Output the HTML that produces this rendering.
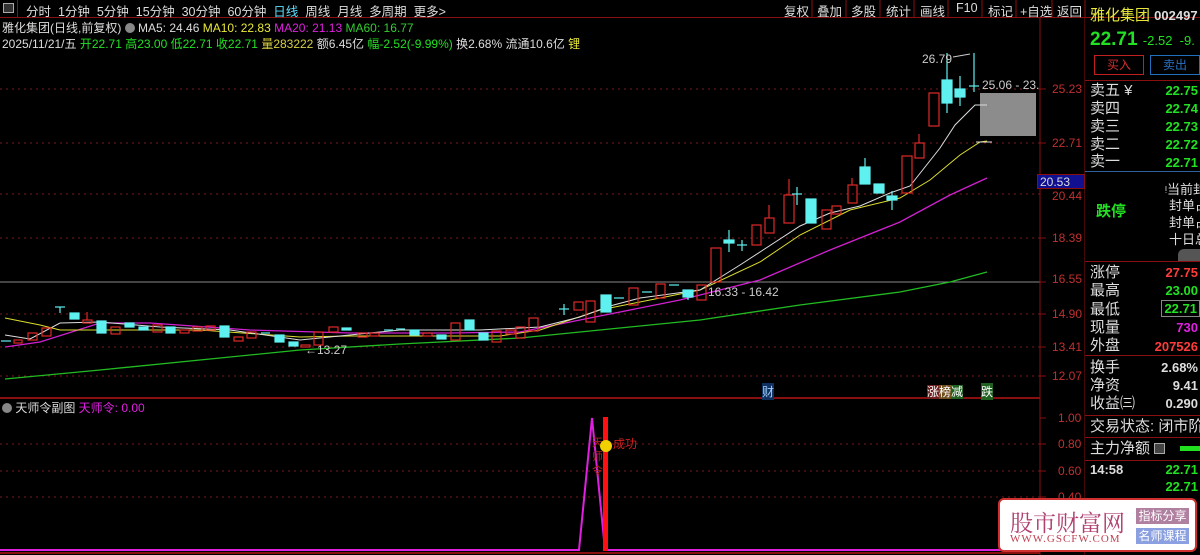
<!DOCTYPE html>
<html><head><meta charset="utf-8"><style>
*{margin:0;padding:0;box-sizing:border-box}
body{width:1200px;height:555px;background:#000;overflow:hidden;position:relative;font-family:"Liberation Sans","Noto Sans CJK SC",sans-serif;font-size:12px;color:#ccc}
.a{position:absolute;white-space:nowrap}
.r{color:#ff3b3b}.g{color:#22e022}.y{color:#e8e83a}.m{color:#e020e0}.w{color:#ddd}
.ax{position:absolute;left:1050px;color:#c03030;font-size:12px}
.lbl{position:absolute;left:1090px;font-size:15px;color:#ddd;line-height:17px;white-space:nowrap}
.val{position:absolute;right:2px;font-size:13px;font-weight:bold}
</style></head><body>
<div class="a" style="left:0;top:0;width:1200px;height:18px;border-bottom:1px solid #8a1010"></div>
<div class="a" style="left:3px;top:3px;width:11px;height:10px;border:1px solid #aaa;background:#333"></div>
<div class="a" style="left:17px;top:0;width:1px;height:18px;background:#8a1010"></div>
<div class="a w" style="left:26px;top:1px;font-size:12.5px">分时&nbsp;&nbsp;1分钟&nbsp;&nbsp;5分钟&nbsp;&nbsp;15分钟&nbsp;&nbsp;30分钟&nbsp;&nbsp;60分钟&nbsp;&nbsp;<span style="color:#5fe0ff">日线</span>&nbsp;&nbsp;周线&nbsp;&nbsp;月线&nbsp;&nbsp;多周期&nbsp;&nbsp;更多&gt;</div>
<div class="a w" style="left:780px;top:1px;font-size:12.5px">
<span style="position:absolute;left:4px">复权</span><span style="position:absolute;left:37px">叠加</span><span style="position:absolute;left:71px">多股</span><span style="position:absolute;left:106px">统计</span><span style="position:absolute;left:140px">画线</span><span style="position:absolute;left:176px">F10</span><span style="position:absolute;left:208px">标记</span><span style="position:absolute;left:240px">+自选</span><span style="position:absolute;left:277px">返回</span></div>
<svg class="a" style="left:0;top:0" width="1200" height="18"><g stroke="#8a1010"><line x1="812" y1="0" x2="812" y2="18"/><line x1="846" y1="0" x2="846" y2="18"/><line x1="880" y1="0" x2="880" y2="18"/><line x1="914" y1="0" x2="914" y2="18"/><line x1="948" y1="0" x2="948" y2="18"/><line x1="982" y1="0" x2="982" y2="18"/><line x1="1016" y1="0" x2="1016" y2="18"/><line x1="1052" y1="0" x2="1052" y2="18"/><line x1="1085" y1="0" x2="1085" y2="18"/></g></svg>
<div class="a w" style="left:2px;top:19px;font-size:12px">雅化集团(日线,前复权) <span style="display:inline-block;width:10px;height:10px;border-radius:5px;background:#888;vertical-align:-1px"></span> MA5: 24.46 <span class="y">MA10: 22.83</span> <span class="m">MA20: 21.13</span> <span class="g" style="color:#33cc33">MA60: 16.77</span></div>
<div class="a w" style="left:2px;top:35px;font-size:12px">2025/11/21/五 <span class="g">开22.71 高23.00 低22.71 收22.71</span> <span class="y" style="color:#d8d040">量283222</span> 额6.45亿 <span class="g">幅-2.52(-9.99%)</span> 换2.68% 流通10.6亿 <span class="y">锂</span></div>
<svg class="a" style="left:0;top:0" width="1085" height="555">
<g stroke="#7a1a1a" stroke-dasharray="2,4" stroke-width="1">
<line x1="0" y1="89" x2="1040" y2="89"/><line x1="0" y1="143" x2="1040" y2="143"/><line x1="0" y1="194" x2="1040" y2="194"/><line x1="0" y1="238" x2="1040" y2="238"/><line x1="0" y1="314" x2="1040" y2="314"/><line x1="0" y1="347" x2="1040" y2="347"/><line x1="0" y1="376" x2="1040" y2="376"/>
<line x1="0" y1="444" x2="1040" y2="444"/><line x1="0" y1="471" x2="1040" y2="471"/><line x1="0" y1="497" x2="1040" y2="497"/>
</g>
<line x1="0" y1="282" x2="1040" y2="282" stroke="#888"/>
<line x1="1040" y1="18" x2="1040" y2="555" stroke="#8a1010"/>
<line x1="1085" y1="18" x2="1085" y2="555" stroke="#8a1010"/>
<line x1="0" y1="398" x2="1040" y2="398" stroke="#8a1010" stroke-width="2"/>
<g stroke="#8a1010"><line x1="1040" y1="89" x2="1046" y2="89"/><line x1="1040" y1="143" x2="1046" y2="143"/><line x1="1040" y1="238" x2="1046" y2="238"/><line x1="1040" y1="282" x2="1046" y2="282"/><line x1="1040" y1="314" x2="1046" y2="314"/><line x1="1040" y1="347" x2="1046" y2="347"/><line x1="1040" y1="376" x2="1046" y2="376"/><line x1="1040" y1="418" x2="1046" y2="418"/><line x1="1040" y1="444" x2="1046" y2="444"/><line x1="1040" y1="471" x2="1046" y2="471"/><line x1="1040" y1="497" x2="1046" y2="497"/></g>
<polyline fill="none" stroke="#22bb22" stroke-width="1.3" points="5,379 100,370 200,360 300,350 400,344 520,338 600,330 700,320 800,305 900,292 950,282 987,272"/>
<polyline fill="none" stroke="#d020d0" stroke-width="1.3" points="5,347 40,342 100,323 150,323 250,330 350,333 450,333 520,332 600,316 680,300 760,280 830,250 900,222 950,195 987,178"/>
<polyline fill="none" stroke="#dddd30" stroke-width="1" points="5,318 40,325 60,330 100,330 200,330 300,337 350,336 430,336 500,336 540,330 600,310 650,300 700,290 760,262 800,235 850,210 900,198 930,180 960,155 980,142 987,141"/>
<polyline fill="none" stroke="#dddddd" stroke-width="1" points="5,335 30,339 60,323 100,322 160,327 230,330 300,340 400,330 480,330 540,327 580,317 610,306 640,298 700,290 740,265 800,226 830,213 860,206 890,193 910,186 940,148 955,125 975,105 987,105"/>
<g fill="none" stroke="#e02828" stroke-width="1.2">
<rect x="14" y="340" width="8" height="3"/><rect x="28" y="333" width="9" height="7"/><rect x="42" y="328" width="9" height="8"/><rect x="83" y="320" width="9" height="3"/><line x1="87" y1="312" x2="87" y2="320"/>
<rect x="111" y="327" width="9" height="7"/><rect x="153" y="325" width="9" height="7"/><rect x="180" y="330" width="9" height="3"/><rect x="193" y="327" width="9" height="4"/><rect x="206" y="326" width="9" height="4"/><rect x="234" y="337" width="9" height="4"/><rect x="247" y="332" width="9" height="6"/><rect x="301" y="345" width="9" height="2"/><rect x="314" y="332" width="9" height="13"/><rect x="329" y="327" width="9" height="5"/><rect x="358" y="333" width="9" height="4"/><rect x="370" y="333" width="9" height="3"/><rect x="423" y="333" width="9" height="3"/><rect x="451" y="323" width="9" height="17"/><rect x="492" y="331" width="9" height="11"/><rect x="506" y="330" width="9" height="4"/><rect x="516" y="327" width="9" height="11"/>
<rect x="529" y="318" width="9" height="13"/><rect x="574" y="302" width="9" height="8"/><rect x="586" y="301" width="9" height="21"/><rect x="629" y="288" width="9" height="17"/><rect x="656" y="284" width="9" height="14"/><rect x="697" y="285" width="9" height="15"/>
<rect x="711" y="248" width="10" height="34"/><rect x="752" y="225" width="9" height="20"/><rect x="765" y="218" width="9" height="15"/><line x1="769" y1="205" x2="769" y2="218"/><rect x="784" y="195" width="10" height="28"/><line x1="789" y1="179" x2="789" y2="195"/><rect x="822" y="210" width="9" height="19"/><rect x="832" y="206" width="9" height="8"/><rect x="848" y="185" width="9" height="18"/><line x1="852" y1="178" x2="852" y2="185"/><rect x="902" y="156" width="10" height="37"/><rect x="915" y="143" width="9" height="15"/><line x1="919" y1="134" x2="919" y2="143"/><rect x="929" y="93" width="10" height="33"/>
</g>
<g fill="#5ff0f0" stroke="#5ff0f0" stroke-width="1.2">
<line x1="1" y1="341" x2="11" y2="341"/><line x1="55" y1="307" x2="65" y2="307"/><line x1="60" y1="307" x2="60" y2="313"/><rect x="70" y="313" width="9" height="6"/><rect x="97" y="321" width="9" height="12"/><rect x="125" y="323" width="9" height="4"/><rect x="139" y="327" width="9" height="3"/><rect x="166" y="327" width="9" height="6"/><rect x="220" y="326" width="9" height="11"/><line x1="261" y1="333" x2="270" y2="333"/><rect x="275" y="335" width="9" height="7"/><rect x="289" y="342" width="9" height="4"/><rect x="342" y="328" width="9" height="2"/><line x1="384" y1="330" x2="393" y2="330"/><line x1="396" y1="329" x2="405" y2="329"/><rect x="410" y="330" width="9" height="5"/><rect x="437" y="335" width="9" height="4"/><rect x="465" y="320" width="9" height="10"/><rect x="479" y="333" width="9" height="7"/>
<line x1="559" y1="309" x2="569" y2="309"/><line x1="564" y1="304" x2="564" y2="315"/><rect x="601" y="295" width="10" height="17"/><line x1="614" y1="298" x2="624" y2="298"/><line x1="642" y1="292" x2="652" y2="292"/><line x1="669" y1="285" x2="679" y2="285"/><rect x="683" y="290" width="10" height="7"/><line x1="688" y1="297" x2="688" y2="300"/>
<rect x="724" y="240" width="10" height="3"/><line x1="729" y1="230" x2="729" y2="252"/><line x1="737" y1="245" x2="747" y2="245"/><line x1="742" y1="240" x2="742" y2="251"/><line x1="792" y1="194" x2="802" y2="194"/><line x1="797" y1="187" x2="797" y2="205"/><rect x="806" y="199" width="10" height="24"/><rect x="860" y="167" width="10" height="17"/><line x1="865" y1="158" x2="865" y2="167"/><rect x="874" y="184" width="10" height="9"/><rect x="887" y="196" width="10" height="4"/><line x1="892" y1="191" x2="892" y2="210"/><rect x="942" y="80" width="10" height="23"/><line x1="947" y1="53" x2="947" y2="113"/><rect x="955" y="89" width="10" height="8"/><line x1="960" y1="76" x2="960" y2="106"/><line x1="969" y1="86" x2="979" y2="86"/><line x1="974" y1="53" x2="974" y2="92"/>
</g>
<rect x="980" y="93" width="56" height="43" fill="#8c8c8c"/>
<line x1="975" y1="105" x2="987" y2="105" stroke="#ddd"/><line x1="976" y1="142" x2="992" y2="142" stroke="#ddd"/>
<text x="922" y="63" fill="#ccc" font-size="12" font-family="Liberation Sans">26.79</text>
<polyline points="953,57 970,54" stroke="#ccc" fill="none"/>
<text x="982" y="89" fill="#ccc" font-size="12" font-family="Liberation Sans">25.06 - 23.</text>
<text x="708" y="296" fill="#ccc" font-size="12" font-family="Liberation Sans">16.33 - 16.42</text>
<text x="305" y="354" fill="#ccc" font-size="12" font-family="Liberation Sans">←13.27</text>
<polyline fill="none" stroke="#e020e0" stroke-width="2" points="0,550 579,550 592,418 605,550 1040,550"/>
<text x="592" y="446" fill="#b02020" font-size="11" font-family="Noto Sans CJK SC">天</text>
<text x="592" y="460" fill="#b02020" font-size="11" font-family="Noto Sans CJK SC">师</text>
<text x="592" y="474" fill="#b02020" font-size="11" font-family="Noto Sans CJK SC">令</text>
<rect x="603" y="417" width="5" height="134" fill="#ff1010"/>
<circle cx="606" cy="446" r="6" fill="#f0d000"/>
<text x="613" y="448" fill="#d02020" font-size="12" font-family="Liberation Sans,Noto Sans CJK SC">成功</text>
<line x1="0" y1="553" x2="1040" y2="553" stroke="#8a1010" stroke-width="2"/>
</svg>
<div class="a" style="left:762px;top:383px;font-size:12px;color:#9fd0ff;background:#103060">财</div>
<div class="a" style="left:927px;top:383px;font-size:12px;color:#fff"><span style="background:#702020">涨</span><span style="background:#705020">榜</span><span style="background:#206020">减</span></div>
<div class="a" style="left:981px;top:383px;font-size:12px;color:#fff;background:#206020">跌</div>
<div class="a w" style="left:2px;top:399px;font-size:12px"><span style="display:inline-block;width:10px;height:10px;border-radius:5px;background:#888;vertical-align:-1px"></span> 天师令副图 <span class="m">天师令: 0.00</span></div>
<div class="ax" style="top:82px;left:1052px">25.23</div>
<div class="ax" style="top:136px;left:1052px">22.71</div>
<div class="a" style="left:1037px;top:174px;width:48px;height:15px;background:#101090;border:1px solid #8a1010;color:#ddd;font-size:12px;padding-left:2px">20.53</div>
<div class="ax" style="top:189px;left:1052px">20.44</div>
<div class="ax" style="top:231px;left:1052px">18.39</div>
<div class="ax" style="top:272px;left:1052px">16.55</div>
<div class="ax" style="top:307px;left:1052px">14.90</div>
<div class="ax" style="top:340px;left:1052px">13.41</div>
<div class="ax" style="top:369px;left:1052px">12.07</div>
<div class="ax" style="top:411px;left:1058px">1.00</div>
<div class="ax" style="top:437px;left:1058px">0.80</div>
<div class="ax" style="top:464px;left:1058px">0.60</div>
<div class="ax" style="top:490px;left:1058px">0.40</div>
<div class="a" style="left:1090px;top:4px;font-size:15px;color:#e8e83a">雅化集团 <span style="color:#ddd;font-size:13px;font-weight:bold">002497</span></div>
<div class="a g" style="left:1090px;top:29px;font-size:19px;font-weight:bold">22.71 <span style="font-size:13px;font-weight:normal">-2.52 &nbsp;-9.</span></div>
<div class="a" style="left:1094px;top:55px;width:50px;height:20px;border:1px solid #c02020;color:#d03030;font-size:12px;text-align:center;line-height:18px">买入</div>
<div class="a" style="left:1150px;top:55px;width:50px;height:20px;border:1px solid #2070c0;color:#2a70c0;font-size:12px;text-align:center;line-height:18px">卖出</div>
<div class="a" style="left:1085px;top:80px;width:115px;height:1px;background:#8a1010"></div>
<div class="lbl" style="top:82px">卖五 ¥</div><div class="val g" style="top:83px">22.75</div>
<div class="lbl" style="top:100px">卖四</div><div class="val g" style="top:101px">22.74</div>
<div class="lbl" style="top:118px">卖三</div><div class="val g" style="top:119px">22.73</div>
<div class="lbl" style="top:136px">卖二</div><div class="val g" style="top:137px">22.72</div>
<div class="lbl" style="top:153px">卖一</div><div class="val g" style="top:155px">22.71</div>
<div class="a" style="left:1085px;top:171px;width:115px;height:1px;background:#3060a0"></div>
<div class="a g" style="left:1096px;top:200px;font-size:15px;font-weight:bold">跌停</div>
<div class="a w" style="left:1165px;top:179px;font-size:13px">ᵎ当前封</div>
<div class="a w" style="left:1169px;top:195px;font-size:13px">封单占</div>
<div class="a w" style="left:1169px;top:212px;font-size:13px">封单占</div>
<div class="a w" style="left:1169px;top:229px;font-size:13px">十日总</div>
<div class="a" style="left:1178px;top:249px;width:22px;height:12px;border-radius:6px 0 0 0;background:#555"></div>
<div class="a" style="left:1085px;top:261px;width:115px;height:1px;background:#8a1010"></div>
<div class="lbl" style="top:264px">涨停</div><div class="val r" style="top:265px">27.75</div>
<div class="lbl" style="top:282px">最高</div><div class="val g" style="top:283px">23.00</div>
<div class="lbl" style="top:301px">最低</div><div class="val g" style="top:300px;border:1px solid #888;padding:0 2px;right:0">22.71</div>
<div class="lbl" style="top:319px">现量</div><div class="val m" style="top:320px">730</div>
<div class="lbl" style="top:337px">外盘</div><div class="val r" style="top:339px">207526</div>
<div class="a" style="left:1085px;top:355px;width:115px;height:1px;background:#8a1010"></div>
<div class="lbl" style="top:359px">换手</div><div class="val w" style="top:360px">2.68%</div>
<div class="lbl" style="top:377px">净资</div><div class="val w" style="top:378px">9.41</div>
<div class="lbl" style="top:395px">收益㈢</div><div class="val w" style="top:396px">0.290</div>
<div class="a" style="left:1085px;top:415px;width:115px;height:1px;background:#8a1010"></div>
<div class="lbl" style="top:418px;width:110px;height:18px;overflow:hidden">交易状态: 闭市阶段</div>
<div class="a" style="left:1085px;top:437px;width:115px;height:1px;background:#8a1010"></div>
<div class="lbl" style="top:440px">主力净额 <span style="display:inline-block;width:11px;height:11px;border:1px solid #aaa;background:#444;vertical-align:-1px"></span></div>
<div class="a" style="left:1180px;top:446px;width:20px;height:5px;background:#20e020"></div>
<div class="a" style="left:1085px;top:460px;width:115px;height:1px;background:#8a1010"></div>
<div class="a w" style="left:1090px;top:462px;font-size:13px;font-weight:bold">14:58</div><div class="val g" style="top:462px">22.71</div>
<div class="val g" style="top:479px">22.71</div>
<div class="a" style="left:998px;top:498px;width:199px;height:54px;background:#fff;border:2px solid #d03030;border-radius:6px"></div>
<div class="a" style="left:1010px;top:505px;font-size:23px;color:#b04070;font-family:'Noto Serif CJK SC',serif">股市财富网</div>
<div class="a" style="left:1010px;top:533px;font-size:11px;color:#c04050;font-family:'Liberation Serif',serif;letter-spacing:1px">WWW.GSCFW.COM</div>
<div class="a" style="left:1136px;top:508px;width:53px;height:16px;background:#b080a0;color:#fff;font-size:12px;text-align:center;line-height:16px">指标分享</div>
<div class="a" style="left:1136px;top:528px;width:53px;height:16px;background:#8aa0e0;color:#fff;font-size:12px;text-align:center;line-height:16px">名师课程</div>
</body></html>
